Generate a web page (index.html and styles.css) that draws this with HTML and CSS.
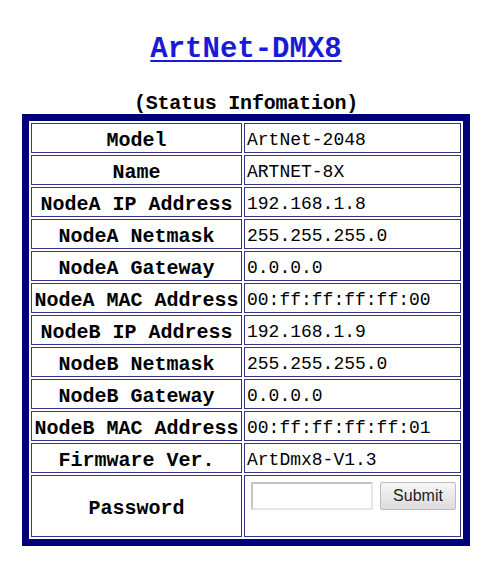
FILE: index.html
```html
<!DOCTYPE html>
<html>
<head>
<meta charset="utf-8">
<link rel="stylesheet" href="styles.css">
</head>
<body>
<div class="page">
  <h1 class="title"><a href="#">ArtNet-DMX8</a></h1>
  <div class="subtitle">(Status Infomation)</div>
  <table class="status">
    <tr><td class="label">Model</td><td class="value">ArtNet-2048</td></tr>
    <tr><td class="label">Name</td><td class="value">ARTNET-8X</td></tr>
    <tr><td class="label">NodeA IP Address</td><td class="value">192.168.1.8</td></tr>
    <tr><td class="label">NodeA Netmask</td><td class="value">255.255.255.0</td></tr>
    <tr><td class="label">NodeA Gateway</td><td class="value">0.0.0.0</td></tr>
    <tr><td class="label">NodeA MAC Address</td><td class="value">00:ff:ff:ff:ff:00</td></tr>
    <tr><td class="label">NodeB IP Address</td><td class="value">192.168.1.9</td></tr>
    <tr><td class="label">NodeB Netmask</td><td class="value">255.255.255.0</td></tr>
    <tr><td class="label">NodeB Gateway</td><td class="value">0.0.0.0</td></tr>
    <tr><td class="label">NodeB MAC Address</td><td class="value">00:ff:ff:ff:ff:01</td></tr>
    <tr><td class="label">Firmware Ver.</td><td class="value">ArtDmx8-V1.3</td></tr>
    <tr class="pw-row"><td class="label">Password</td><td class="value pw"><form class="pw-form"><input class="pw-input" type="password"><button class="pw-btn" type="button">Submit</button></form></td></tr>
  </table>
</div>
</body>
</html>
```

FILE: styles.css
```css
html, body {
  margin: 0;
  padding: 0;
  background: #ffffff;
}

.page {
  padding-top: 32px;
  font-family: "Liberation Mono", monospace;
  color: #000;
}

.title {
  margin: 0;
  text-align: center;
  font-size: 29px;
  line-height: 36px;
  font-weight: bold;
}

.title a {
  color: #1a1ad6;
  text-decoration: underline;
  text-decoration-thickness: 2px;
  text-underline-offset: 3px;
}

.subtitle {
  margin-top: 25px;
  text-align: center;
  font-size: 20px;
  line-height: 22px;
  font-weight: bold;
  letter-spacing: -0.2px;
}

.status {
  margin: -1px auto 0;
  width: 448px;
  border: 7px solid #00007a;
  border-spacing: 2px;
  table-layout: fixed;
}

.status td {
  border: 1px solid #34348a;
  height: 30px;
  padding: 4px 0 0;
  box-sizing: border-box;
}

.status td.label {
  width: 211px;
  text-align: center;
  font-weight: bold;
  font-size: 20px;
  white-space: nowrap;
}

.status td.value {
  padding-left: 2px;
  font-size: 18px;
  white-space: nowrap;
}

.status .pw-row td {
  height: 62px;
}

.status td.pw {
  vertical-align: top;
  padding-top: 6px;
  padding-left: 6px;
}

.pw-form {
  margin: 0;
  display: flex;
  align-items: center;
  gap: 7px;
}

.pw-input {
  width: 122px;
  height: 28px;
  box-sizing: border-box;
  border: 2px solid #c4c4c4;
  border-right-color: #e6e6e6;
  border-bottom-color: #e6e6e6;
  background: #fff;
  margin: 0;
  padding: 0 3px;
}

.pw-btn {
  width: 76px;
  height: 28px;
  box-sizing: border-box;
  margin: 0;
  padding: 0;
  border: 1px solid #bdbdbd;
  border-radius: 2px;
  background: linear-gradient(#f6f6f6, #dcdcdc);
  font-family: "Liberation Sans", Arial, sans-serif;
  font-size: 16px;
  color: #222;
}
```
